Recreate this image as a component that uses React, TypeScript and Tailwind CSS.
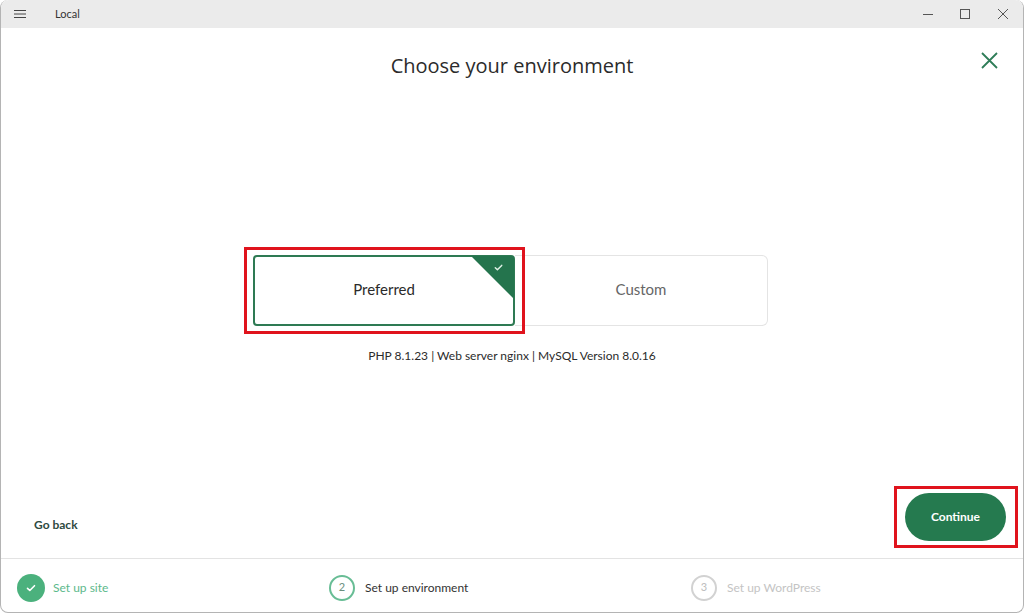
import React from 'react';

const Check = ({ className }: { className?: string }) => (
  <svg viewBox="0 0 12 12" className={className} fill="none" stroke="currentColor" strokeWidth="1.6" strokeLinecap="round" strokeLinejoin="round">
    <path d="M2.5 6.3l2.3 2.2 4.7-4.8" />
  </svg>
);

const TitleBar = () => (
  <div className="h-[28px] shrink-0 bg-[#ebebeb] flex items-center rounded-t-[8px]">
    <div className="w-[37px] flex justify-center pl-[1px]">
      <svg width="12" height="10" viewBox="0 0 12 10" stroke="#444" strokeWidth="1">
        <path d="M0 1.5h12M0 5h12M0 8.5h12" />
      </svg>
    </div>
    <span className="ml-[17px] text-[11px] text-[#333]">Local</span>
    <div className="ml-auto flex items-center h-full">
      <div className="w-[37px] flex justify-center">
        <svg width="10" height="10" viewBox="0 0 10 10" stroke="#555" strokeWidth="1"><path d="M0 5.5h10" /></svg>
      </div>
      <div className="w-[37px] flex justify-center">
        <svg width="10" height="10" viewBox="0 0 10 10" fill="none" stroke="#555" strokeWidth="1"><rect x="0.5" y="0.5" width="9" height="9" /></svg>
      </div>
      <div className="w-[40px] flex justify-center">
        <svg width="10" height="10" viewBox="0 0 10 10" stroke="#555" strokeWidth="1"><path d="M0 0l10 10M10 0L0 10" /></svg>
      </div>
    </div>
  </div>
);

const Stepper = () => (
  <div className="h-[54px] shrink-0 border-t border-[#e3e3e3] flex items-center pl-[16px] pt-[4px] text-[12px]">
    <div className="w-[312px] flex items-center gap-[8px]">
      <div className="w-[28px] h-[28px] rounded-full bg-[#4bb17d] flex items-center justify-center text-white">
        <Check className="w-[12px] h-[12px]" />
      </div>
      <span className="text-[#5cb98b]">Set up site</span>
    </div>
    <div className="w-[362px] flex items-center gap-[10px]">
      <div className="w-[26px] h-[26px] rounded-full border-2 border-[#68bd95] flex items-center justify-center text-[11px] text-[#6a8f7e]">2</div>
      <span className="text-[#333]">Set up environment</span>
    </div>
    <div className="flex items-center gap-[10px]">
      <div className="w-[26px] h-[26px] rounded-full border-2 border-[#d2d2d2] flex items-center justify-center text-[11px] text-[#bdbdbd]">3</div>
      <span className="text-[#c4c4c4]">Set up WordPress</span>
    </div>
  </div>
);

export default function App() {
  return (
    <div className="w-[1024px] h-[614px] bg-white overflow-hidden" style={{ fontFamily: 'Lato, "Noto Sans", sans-serif' }}>
      <div className="h-[613px] border border-t-0 border-[#b4b4b4] rounded-[8px] flex flex-col overflow-hidden">
        <TitleBar />
        <div className="flex-1 relative flex flex-col">
          <button className="absolute right-[25px] top-[24px] text-[#2f7d58]">
            <svg width="17" height="17" viewBox="0 0 17 17" stroke="currentColor" strokeWidth="1.8"><path d="M1 1l15 15M16 1L1 16" /></svg>
          </button>
          <h1 className="pt-[24px] text-center text-[20px] leading-[28px] text-[#2b2b2b]" style={{ fontFamily: '"Open Sans", Lato, sans-serif' }}>
            Choose your environment
          </h1>
          <div className="mt-[175px] flex justify-center">
            <div className="flex ml-[-3px]">
              <div className="relative w-[262px] h-[71px] border-2 border-[#2e7a53] rounded-[4px] flex items-center justify-center pb-[2px] text-[15px] text-[#2a2a2a]">
                Preferred
                <div className="absolute top-[-1px] right-[-1px] w-[43px] h-[43px] bg-[#24744d] rounded-tr-[3px] [clip-path:polygon(0_0,100%_0,100%_100%)]">
                  <Check className="absolute right-[10px] top-[6px] w-[11px] h-[11px] text-[#dff0e6]" />
                </div>
                <div className="absolute left-[-11px] right-[-12px] top-[-10px] bottom-[-10px] border-[3px] border-[#e0131d] pointer-events-none" />
              </div>
              <div className="w-[253px] h-[71px] border border-l-0 border-[#e4e4e4] rounded-r-[6px] flex items-center justify-center pb-[2px] text-[15px] text-[#666]">
                Custom
              </div>
            </div>
          </div>
          <p className="mt-[22px] text-center text-[12px] leading-[16px] text-[#2b2b2b]">
            PHP 8.1.23 | Web server nginx | MySQL Version 8.0.16
          </p>
          <div className="mt-auto flex items-end justify-between pl-[33px] pr-[5px] pb-[9px]">
            <span className="mb-[16px] text-[12px] leading-[16px] font-bold text-[#2e4a3f]">Go back</span>
            <div className="border-[3px] border-[#e0131d] pl-[8px] pr-[9px] py-[4px] mb-[1px]">
              <button className="w-[101px] h-[48px] rounded-full bg-[#257a4f] text-white text-[12px] font-bold">Continue</button>
            </div>
          </div>
        </div>
        <Stepper />
      </div>
    </div>
  );
}
